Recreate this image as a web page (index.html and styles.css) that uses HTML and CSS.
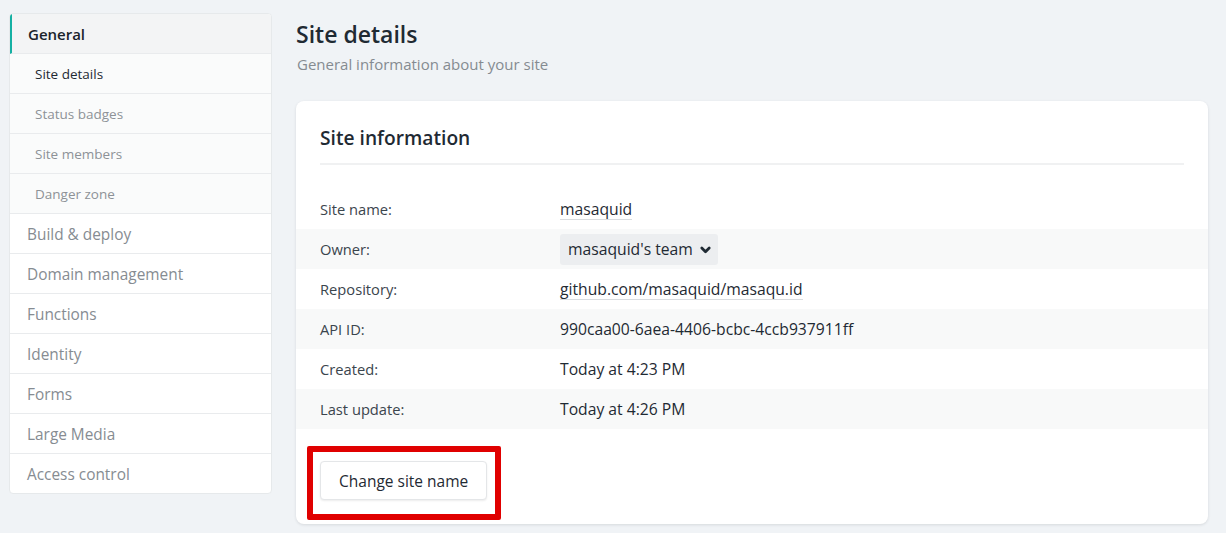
FILE: index.html
```html
<!DOCTYPE html>
<html>
<head>
<meta charset="utf-8">
<link rel="stylesheet" href="styles.css">
</head>
<body>
<div class="page">
  <nav class="sidebar">
    <div class="nav-item nav-top active">General</div>
    <div class="nav-item nav-sub current">Site details</div>
    <div class="nav-item nav-sub">Status badges</div>
    <div class="nav-item nav-sub">Site members</div>
    <div class="nav-item nav-sub">Danger zone</div>
    <div class="nav-item nav-top">Build &amp; deploy</div>
    <div class="nav-item nav-top">Domain management</div>
    <div class="nav-item nav-top">Functions</div>
    <div class="nav-item nav-top">Identity</div>
    <div class="nav-item nav-top">Forms</div>
    <div class="nav-item nav-top">Large Media</div>
    <div class="nav-item nav-top last">Access control</div>
  </nav>
  <main class="main">
    <h1 class="title">Site details</h1>
    <p class="subtitle">General information about your site</p>
    <section class="card">
      <h2 class="card-title">Site information</h2>
      <dl class="info">
        <div class="row"><dt>Site name:</dt><dd><span class="link">masaquid</span></dd></div>
        <div class="row alt"><dt>Owner:</dt><dd><span class="select">masaquid's team <svg class="chev" width="13" height="12" viewBox="0 0 13 12"><path d="M2.8 4 L6.5 7.7 L10.2 4" fill="none" stroke="#1f2a33" stroke-width="2.8" stroke-linecap="round" stroke-linejoin="round"/></svg></span></dd></div>
        <div class="row"><dt>Repository:</dt><dd><span class="link">github.com/masaquid/masaqu.id</span></dd></div>
        <div class="row alt"><dt>API ID:</dt><dd>990caa00-6aea-4406-bcbc-4ccb937911ff</dd></div>
        <div class="row"><dt>Created:</dt><dd>Today at 4:23 PM</dd></div>
        <div class="row alt"><dt>Last update:</dt><dd>Today at 4:26 PM</dd></div>
      </dl>
      <div class="actions">
        <button class="btn">Change site name</button>
        <span class="highlight"></span>
      </div>
    </section>
  </main>
</div>
</body>
</html>
```

FILE: styles.css
```css
* { box-sizing: border-box; }
html, body { margin: 0; padding: 0; }
body {
  background: #f0f3f6;
  font-family: "Open Sans", "Noto Sans", sans-serif;
  color: #1f2a33;
  width: 1226px;
  height: 533px;
  overflow: hidden;
}
.page {
  display: flex;
  align-items: flex-start;
  padding: 13px 18px 0 9px;
  gap: 24px;
}
.sidebar {
  width: 263px;
  flex: none;
  background: #fff;
  border: 1px solid #e6e9eb;
  border-radius: 4px;
  overflow: hidden;
}
.nav-item {
  height: 40px;
  display: flex;
  align-items: center;
  border-bottom: 1px solid #e9ebed;
  color: #868c92;
  padding-top: 1px;
}
.nav-item.last { border-bottom: none; height: 39px; }
.nav-top {
  font-size: 15.4px;
  padding-left: 17px;
}
.nav-top.active {
  background: #f3f4f5;
  color: #1a232b;
  font-weight: 600;
  font-size: 15px;
  border-left: 2px solid #15b0a3;
  padding-left: 16px;
  padding-top: 0;
}
.nav-sub {
  font-size: 13.5px;
  padding-left: 25px;
  background: #fafbfb;
  color: #8d9297;
  padding-top: 0;
}
.nav-sub.current { color: #1f2a33; }
.main {
  flex: 1;
  padding-top: 6px;
}
.title {
  margin: 0;
  font-size: 23px;
  font-weight: 600;
  line-height: 30px;
  color: #1f2a33;
}
.subtitle {
  margin: 5px 0 0 1px;
  font-size: 15px;
  line-height: 20px;
  color: #858b91;
}
.card {
  margin-top: 27px;
  background: #fff;
  border-radius: 8px;
  box-shadow: 0 1px 3px rgba(30, 40, 50, 0.12);
  padding: 22px 0 24px;
  position: relative;
}
.card-title {
  margin: 0 24px;
  font-size: 19.2px;
  font-weight: 600;
  line-height: 30px;
  padding-bottom: 10px;
  border-bottom: 2px solid #f0f1f2;
}
.info {
  margin: 24px 0 0;
}
.row {
  display: flex;
  align-items: center;
  height: 40px;
  padding: 0 24px;
  font-size: 15.7px;
}
.row.alt { background: #f8f9f9; }
.row dt {
  width: 240px;
  color: #3b454d;
  font-size: 14.7px;
}
.row dd {
  margin: 0;
  color: #1f2a33;
  display: flex;
  align-items: center;
}
.link {
  border-bottom: 1.5px solid #d9dcdf;
  line-height: 19px;
  padding-top: 2px;
}
.select {
  display: inline-flex;
  align-items: center;
  gap: 6px;
  background: #eceef0;
  border-radius: 3px;
  height: 31px;
  padding: 0 6px 0 8px;
}
.chev { display: block; margin-top: 1px; }
.actions {
  position: relative;
  margin: 32px 24px 0;
}
.btn {
  font-family: inherit;
  font-size: 15.5px;
  color: #1f2a33;
  background: #fff;
  border: 1px solid #e4e6e8;
  border-radius: 4px;
  height: 39px;
  padding: 0 18px;
  box-shadow: 0 1px 2px rgba(0, 0, 0, 0.08);
}
.highlight {
  position: absolute;
  left: -13px;
  top: -15px;
  width: 194px;
  height: 74px;
  border: 6px solid #e00000;
  border-radius: 2px;
  pointer-events: none;
}
```
